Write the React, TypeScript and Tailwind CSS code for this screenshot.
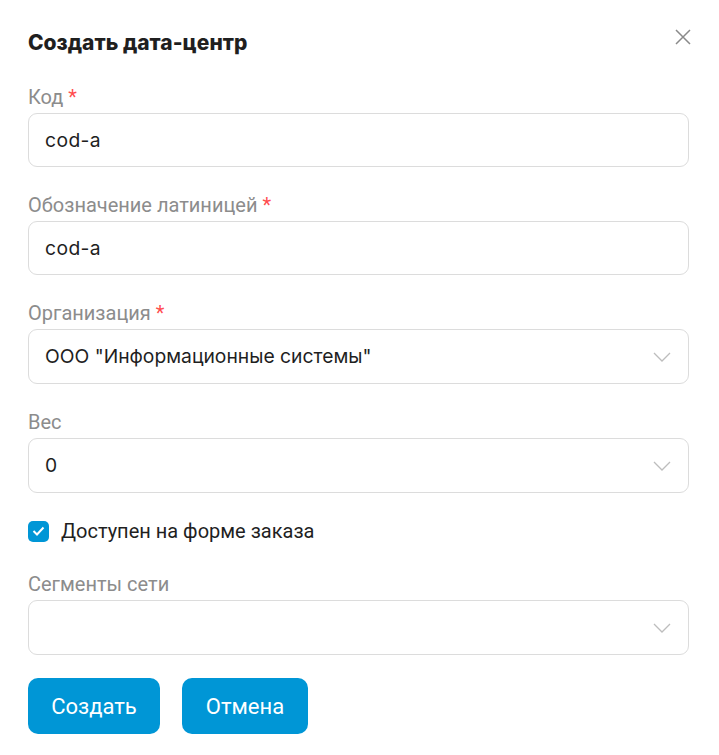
import React from "react";

function Chevron() {
  return (
    <svg width="18" height="10" viewBox="0 0 18 10" fill="none">
      <path d="M1 1l8 8 8-8" stroke="#bdbdbd" strokeWidth="1.3" />
    </svg>
  );
}

function Label({ text, required }: { text: string; required?: boolean }) {
  return (
    <div className="h-[24px] leading-[24px] text-[20px] text-[#8c8c8c] mb-[4px] font-['Roboto',sans-serif]">
      {text}
      {required && <span className="text-[#ff4d4f]"> *</span>}
    </div>
  );
}

function Input({ value }: { value: string }) {
  return (
    <div className="h-[54px] rounded-[9px] border border-[#dcdcdc] flex items-center px-[16px] text-[19.3px] text-[#1f1f1f] font-['Inter',sans-serif] tracking-[0.4px]">
      {value}
    </div>
  );
}

function Select({ value }: { value: string }) {
  return (
    <div className="h-[55px] rounded-[9px] border border-[#dcdcdc] flex items-center justify-between pl-[16px] pr-[17px] text-[19.3px] text-[#1f1f1f] font-['Inter',sans-serif]">
      <span>{value}</span>
      <Chevron />
    </div>
  );
}

export default function App() {
  return (
    <div className="w-[719px] h-[755px] bg-white pl-[28px] pr-[30px] pt-[29px] font-['Inter',sans-serif]">
      <div className="flex items-center justify-between h-[28px]">
        <div className="text-[21px] font-extrabold text-[#1f1f1f]">Создать дата-центр</div>
        <svg width="16" height="16" viewBox="0 0 16 16" className="mr-[-2px] mt-[-13px]">
          <path d="M1 1l14 14M15 1L1 15" stroke="#8a8a8a" strokeWidth="1.5" />
        </svg>
      </div>
      <div className="mt-[28px] flex flex-col gap-[26px]">
        <div>
          <Label text="Код" required />
          <Input value="cod-a" />
        </div>
        <div>
          <Label text="Обозначение латиницей" required />
          <Input value="cod-a" />
        </div>
        <div>
          <Label text="Организация" required />
          <Select value='ООО "Информационные системы"' />
        </div>
        <div>
          <Label text="Вес" />
          <Select value="0" />
        </div>
      </div>
      <div className="flex items-center gap-[12px] mt-[27px] h-[22px]">
        <div className="w-[21px] h-[21px] rounded-[5px] bg-[#0096d6] flex items-center justify-center">
          <svg width="13" height="10" viewBox="0 0 13 10" fill="none">
            <path d="M1.5 5l3.5 3.5 6.5-7" stroke="white" strokeWidth="2" />
          </svg>
        </div>
        <span className="text-[20px] text-[#1f1f1f] font-['Roboto',sans-serif]">Доступен на форме заказа</span>
      </div>
      <div className="mt-[30px]">
        <Label text="Сегменты сети" />
        <Select value="" />
      </div>
      <div className="flex gap-[22px] mt-[23px]">
        <button className="h-[56px] w-[132px] rounded-[10px] bg-[#0096d6] text-white text-[22px] font-['Roboto',sans-serif]">Создать</button>
        <button className="h-[56px] w-[126px] rounded-[10px] bg-[#0096d6] text-white text-[22px] font-['Roboto',sans-serif]">Отмена</button>
      </div>
    </div>
  );
}
